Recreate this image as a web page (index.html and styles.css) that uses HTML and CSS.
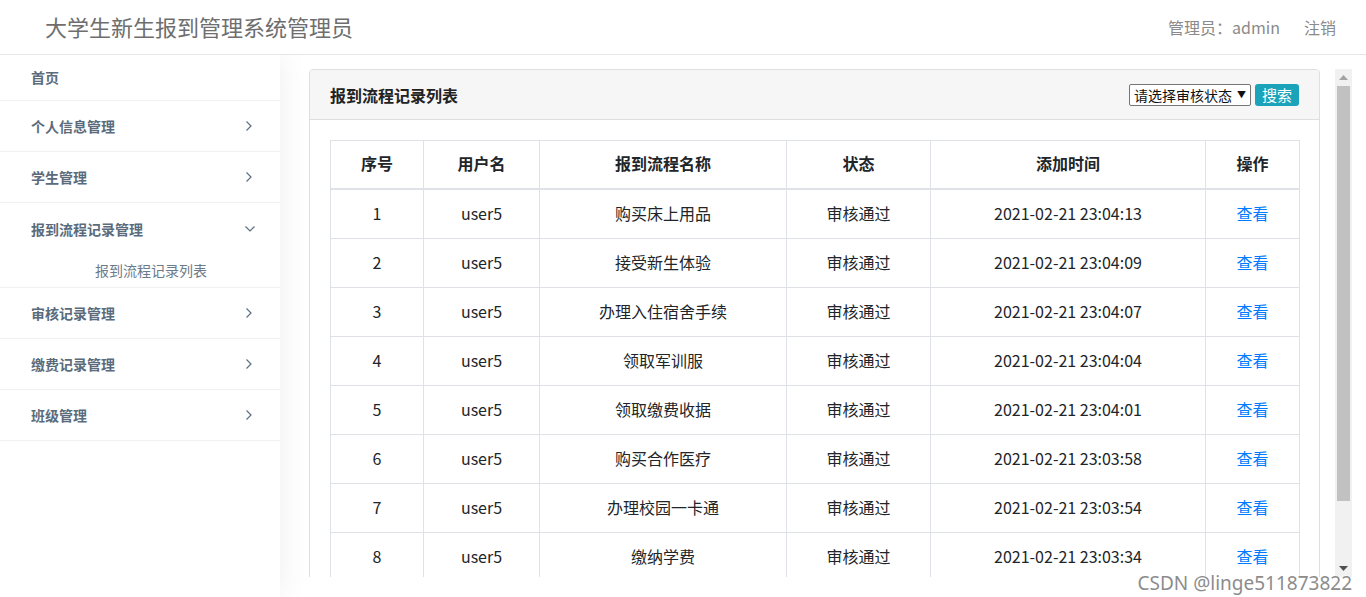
FILE: index.html
```html
<!DOCTYPE html>
<html lang="zh-CN">
<head>
<meta charset="utf-8">
<title>大学生新生报到管理系统</title>
<link rel="stylesheet" href="styles.css">
</head>
<body>
<header class="topbar">
  <div class="brand">大学生新生报到管理系统管理员</div>
  <div class="user">
    <span class="who">管理员：admin</span>
    <a class="logout">注销</a>
  </div>
</header>
<div class="layout">
  <aside class="sidebar">
    <div class="nav-item home"><span>首页</span></div>
    <div class="nav-item"><span>个人信息管理</span><svg class="chev" width="8" height="12" viewBox="0 0 8 12"><path d="M1.5 1.5 L6 6 L1.5 10.5" fill="none" stroke="#5d6f80" stroke-width="1.2"/></svg></div>
    <div class="nav-item"><span>学生管理</span><svg class="chev" width="8" height="12" viewBox="0 0 8 12"><path d="M1.5 1.5 L6 6 L1.5 10.5" fill="none" stroke="#5d6f80" stroke-width="1.2"/></svg></div>
    <div class="nav-group">
      <div class="nav-item open"><span>报到流程记录管理</span><svg class="chev down" width="12" height="8" viewBox="0 0 12 8"><path d="M1.5 1.5 L6 6 L10.5 1.5" fill="none" stroke="#5d6f80" stroke-width="1.2"/></svg></div>
      <div class="sub-item">报到流程记录列表</div>
    </div>
    <div class="nav-item"><span>审核记录管理</span><svg class="chev" width="8" height="12" viewBox="0 0 8 12"><path d="M1.5 1.5 L6 6 L1.5 10.5" fill="none" stroke="#5d6f80" stroke-width="1.2"/></svg></div>
    <div class="nav-item"><span>缴费记录管理</span><svg class="chev" width="8" height="12" viewBox="0 0 8 12"><path d="M1.5 1.5 L6 6 L1.5 10.5" fill="none" stroke="#5d6f80" stroke-width="1.2"/></svg></div>
    <div class="nav-item"><span>班级管理</span><svg class="chev" width="8" height="12" viewBox="0 0 8 12"><path d="M1.5 1.5 L6 6 L1.5 10.5" fill="none" stroke="#5d6f80" stroke-width="1.2"/></svg></div>
  </aside>
  <main class="main">
    <div class="frame">
      <div class="viewport">
        <section class="panel">
          <div class="panel-head">
            <h3 class="panel-title">报到流程记录列表</h3>
            <div class="tools">
              <div class="select"><span>请选择审核状态</span><span class="caret">▼</span></div>
              <button class="btn-search">搜索</button>
            </div>
          </div>
          <div class="panel-body">
            <table class="grid">
              <thead>
                <tr><th class="c1">序号</th><th class="c2">用户名</th><th class="c3">报到流程名称</th><th class="c4">状态</th><th class="c5">添加时间</th><th class="c6">操作</th></tr>
              </thead>
              <tbody>
                <tr><td>1</td><td>user5</td><td>购买床上用品</td><td>审核通过</td><td>2021-02-21 23:04:13</td><td><a class="view">查看</a></td></tr>
                <tr><td>2</td><td>user5</td><td>接受新生体验</td><td>审核通过</td><td>2021-02-21 23:04:09</td><td><a class="view">查看</a></td></tr>
                <tr><td>3</td><td>user5</td><td>办理入住宿舍手续</td><td>审核通过</td><td>2021-02-21 23:04:07</td><td><a class="view">查看</a></td></tr>
                <tr><td>4</td><td>user5</td><td>领取军训服</td><td>审核通过</td><td>2021-02-21 23:04:04</td><td><a class="view">查看</a></td></tr>
                <tr><td>5</td><td>user5</td><td>领取缴费收据</td><td>审核通过</td><td>2021-02-21 23:04:01</td><td><a class="view">查看</a></td></tr>
                <tr><td>6</td><td>user5</td><td>购买合作医疗</td><td>审核通过</td><td>2021-02-21 23:03:58</td><td><a class="view">查看</a></td></tr>
                <tr><td>7</td><td>user5</td><td>办理校园一卡通</td><td>审核通过</td><td>2021-02-21 23:03:54</td><td><a class="view">查看</a></td></tr>
                <tr class="last"><td>8</td><td>user5</td><td>缴纳学费</td><td>审核通过</td><td>2021-02-21 23:03:34</td><td><a class="view">查看</a></td></tr>
              </tbody>
            </table>
          </div>
        </section>
      </div>
      <div class="vscroll">
        <div class="sb-btn"><svg width="9" height="5" viewBox="0 0 9 5"><polygon points="0,5 4.5,0 9,5" fill="#a3a3a3"/></svg></div>
        <div class="sb-track"><div class="sb-thumb"></div></div>
        <div class="sb-btn"><svg width="9" height="5" viewBox="0 0 9 5"><polygon points="0,0 4.5,5 9,0" fill="#505050"/></svg></div>
      </div>
    </div>
  </main>
</div>
<div class="watermark">CSDN @linge511873822</div>
</body>
</html>
```
FILE: styles.css
```css
* { box-sizing: border-box; }
html, body { margin: 0; padding: 0; height: 100%; overflow: hidden; }
body {
  font-family: "Microsoft YaHei", "Noto Sans CJK SC", sans-serif;
  color: #212529;
  background: #fff;
  width: 1366px;
  height: 597px;
  position: relative;
}
.topbar {
  height: 55px;
  border-bottom: 1px solid #e6e6e6;
  display: flex;
  align-items: center;
  justify-content: space-between;
  padding: 0 30px 0 45px;
  background: #fff;
  position: relative;
  z-index: 2;
}
.brand { font-size: 22px; color: #6e6e6e; line-height: 1; margin-top: -2px; }
.user { display: flex; align-items: center; gap: 24px; font-size: 16px; color: #8a8a8a; margin-top: -1px; }
.logout { color: #8a8a8a; cursor: pointer; }

.layout { display: flex; height: 542px; }
.sidebar {
  width: 280px;
  flex: none;
  background: #fff;
  box-shadow: 0 0 30px rgba(0,0,0,0.07);
  position: relative;
  z-index: 1;
}
.nav-item {
  height: 51px;
  border-bottom: 1px solid #f1f1f1;
  display: flex;
  align-items: center;
  justify-content: space-between;
  padding: 0 27px 0 31px;
  font-size: 14px;
  font-weight: bold;
  color: #5a6b7c;
}
.nav-item.home { height: 46px; padding-bottom: 1px; }
.nav-item.open { border-bottom: none; height: 50px; padding-top: 2px; }
.chev { flex: none; }
.chev.down { margin-right: -3px; }
.nav-group { border-bottom: 1px solid #f1f1f1; }
.sub-item {
  height: 34px;
  padding-left: 95px;
  font-size: 14px;
  color: #6b7b89;
  line-height: 34px;
}

.main {
  flex: 1;
  background: #fff;
  padding: 14px 14px 0 29px;
}
.frame {
  width: 1043px;
  height: 508px;
  display: flex;
}
.viewport {
  flex: 1;
  overflow: hidden;
}
.vscroll {
  width: 17px;
  flex: none;
  background: #f1f1f1;
  display: flex;
  flex-direction: column;
}
.sb-btn {
  height: 17px;
  display: flex;
  align-items: center;
  justify-content: center;
}
.sb-track { flex: 1; display: flex; flex-direction: column; }
.sb-thumb {
  height: 415px;
  margin: 0 2px;
  background: #c1c1c1;
}

.panel {
  width: 1011px;
  border: 1px solid #dfdfdf;
  border-radius: 4px;
  background: #fff;
  height: 560px;
}
.panel-head {
  height: 50px;
  background: #f6f6f6;
  border-bottom: 1px solid #dfdfdf;
  border-radius: 4px 4px 0 0;
  display: flex;
  align-items: center;
  justify-content: space-between;
  padding: 0 20px;
}
.panel-title { margin: 0; font-size: 16px; font-weight: bold; color: #222; }
.tools { display: flex; align-items: center; gap: 4px; }
.select {
  width: 122px;
  height: 22px;
  border: 1px solid #767676;
  border-radius: 2px;
  background: #fff;
  font-size: 14px;
  color: #111;
  display: flex;
  align-items: center;
  justify-content: space-between;
  padding: 0 4px 0 4px;
  line-height: 1;
}
.caret { font-size: 9px; color: #111; }
.btn-search {
  width: 44px;
  height: 22px;
  border: none;
  border-radius: 3px;
  background: #1ba3b9;
  color: #fff;
  font-family: inherit;
  font-size: 15px;
  padding: 0;
  line-height: 22px;
}
.panel-body { padding: 20px; }
.grid {
  width: 969px;
  border-collapse: collapse;
  table-layout: fixed;
  font-size: 16px;
}
.grid th, .grid td {
  border: 1px solid #dee2e6;
  text-align: center;
  padding: 11px 0 13px;
  line-height: 24px;
}
.grid th { font-weight: bold; border-bottom: 2px solid #dee2e6; padding: 10px 0 13px; }
.grid tr.last td { padding-bottom: 30px; }
.c1 { width: 93px; }
.c2 { width: 116px; }
.c3 { width: 247px; }
.c4 { width: 144px; }
.c5 { width: 275px; }
.c6 { width: 94px; }
.view { color: #007bff; cursor: pointer; }

.watermark {
  position: absolute;
  right: 14px;
  bottom: 1px;
  font-family: "Noto Sans", "Noto Sans CJK SC", sans-serif;
  font-size: 19px;
  color: #8c8c8c;
  text-shadow: 0 0 2px #fff, 0 0 2px #fff;
  z-index: 5;
}
```
